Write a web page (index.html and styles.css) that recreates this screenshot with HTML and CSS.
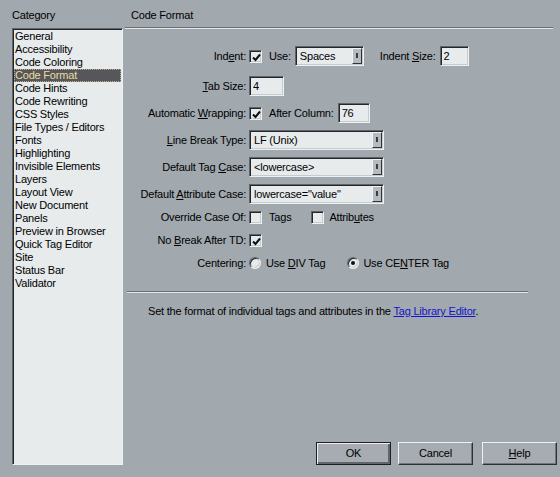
FILE: index.html
```html
<!DOCTYPE html>
<html lang="en">
<head>
    <meta charset="UTF-8">
    <title>Preferences</title>
    <link rel="stylesheet" href="styles.css">
</head>
<body>
    <div class="dialog">
        <div class="sidebar">
            <div class="caption">Category</div>
            <ul class="list">
                <li>General</li>
                <li>Accessibility</li>
                <li>Code Coloring</li>
                <li class="selected">Code Format</li>
                <li>Code Hints</li>
                <li>Code Rewriting</li>
                <li>CSS Styles</li>
                <li>File Types / Editors</li>
                <li>Fonts</li>
                <li>Highlighting</li>
                <li>Invisible Elements</li>
                <li>Layers</li>
                <li>Layout View</li>
                <li>New Document</li>
                <li>Panels</li>
                <li>Preview in Browser</li>
                <li>Quick Tag Editor</li>
                <li>Site</li>
                <li>Status Bar</li>
                <li>Validator</li>
            </ul>
        </div>

        <div class="main">
            <div class="caption pad">Code Format</div>
            <div class="rule"></div>

            <div class="form">
                <div class="row first">
                    <label>Ind<u>e</u>nt:</label>
                    <div class="controls">
                        <span class="check on"><svg viewBox="0 0 9 9"><path d="M1 4.5 L3.5 7 L8 1.5"/></svg></span>
                        <span class="text ml7">Use:</span>
                        <span class="select w68"><span class="value">Spaces</span><span class="drop"></span></span>
                        <span class="text ml16">Indent <u>S</u>ize:</span>
                        <input class="field w28" type="text" value="2">
                    </div>
                </div>
                <div class="row wide">
                    <label><u>T</u>ab Size:</label>
                    <div class="controls">
                        <input class="field w34" type="text" value="4">
                    </div>
                </div>
                <div class="row">
                    <label>Automatic <u>W</u>rapping:</label>
                    <div class="controls">
                        <span class="check on"><svg viewBox="0 0 9 9"><path d="M1 4.5 L3.5 7 L8 1.5"/></svg></span>
                        <span class="text ml7">After Column:</span>
                        <input class="field w31" type="text" value="76">
                    </div>
                </div>
                <div class="row">
                    <label><u>L</u>ine Break Type:</label>
                    <div class="controls">
                        <span class="select w134"><span class="value">LF (Unix)</span><span class="drop"></span></span>
                    </div>
                </div>
                <div class="row">
                    <label>Default Tag <u>C</u>ase:</label>
                    <div class="controls">
                        <span class="select w134"><span class="value">&lt;lowercase&gt;</span><span class="drop"></span></span>
                    </div>
                </div>
                <div class="row">
                    <label>Default <u>A</u>ttribute Case:</label>
                    <div class="controls">
                        <span class="select w134"><span class="value">lowercase="value"</span><span class="drop"></span></span>
                    </div>
                </div>
                <div class="row tight">
                    <label>Override Case Of:</label>
                    <div class="controls">
                        <span class="check"></span>
                        <span class="text ml7">Tags</span>
                        <span class="check ml20"></span>
                        <span class="text ml5">Attrib<u>u</u>tes</span>
                    </div>
                </div>
                <div class="row tight">
                    <label>No <u>B</u>reak After TD:</label>
                    <div class="controls">
                        <span class="check on"><svg viewBox="0 0 9 9"><path d="M1 4.5 L3.5 7 L8 1.5"/></svg></span>
                    </div>
                </div>
                <div class="row tight">
                    <label>Centering:</label>
                    <div class="controls">
                        <span class="radio"></span>
                        <span class="text ml5">Use <u>D</u>IV Tag</span>
                        <span class="radio on ml22"></span>
                        <span class="text ml4">Use CE<u>N</u>TER Tag</span>
                    </div>
                </div>
            </div>

            <div class="rule short"></div>

            <p class="note">Set the format of individual tags and attributes in the <a href="#">Tag Library Editor</a>.</p>

            <div class="buttons">
                <button class="default">OK</button>
                <button>Cancel</button>
                <button class="help"><u>H</u>elp</button>
            </div>
        </div>
    </div>
</body>
</html>
```

FILE: styles.css
```css
:root {
    --face: #a1a8ae;
    --well: #e7ebec;
    --shade: #5e646a;
    --dark: #24272a;
    --light: #eef1f2;
    --text: #000;
}

body {
    margin: 0;
    background: var(--face);
    color: var(--text);
    font-family: 'Liberation Sans', Arial, sans-serif;
    font-size: 11px;
    line-height: 13px;
    letter-spacing: -0.2px;
}

u {
    text-decoration: underline;
    text-underline-offset: 1px;
}

.dialog {
    display: flex;
    height: 477px;
}

/* category list on the left */
.sidebar {
    width: 123px;
    padding-left: 12px;
    box-sizing: border-box;
}

.caption {
    height: 27px;
    padding-top: 9px;
    box-sizing: border-box;
}

.caption.pad {
    padding-left: 6px;
}

.list {
    list-style: none;
    margin: 1px 0 0;
    padding: 1px 1px;
    height: 437px;
    box-sizing: border-box;
    background: var(--well);
    border: 1px solid;
    border-color: var(--shade) var(--light) var(--light) var(--shade);
    box-shadow: inset 1px 0 0 var(--dark), inset 0 1px 0 var(--dark);
}

.list li {
    height: 13px;
    padding-left: 1px;
    white-space: nowrap;
}

.list li.selected {
    background: #56565b;
    color: #eadc9c;
    outline: 1px dotted #b8b08a;
    outline-offset: -1px;
}

/* settings panel */
.main {
    flex: 1;
    margin-left: 2px;
    padding-right: 3px;
    display: flex;
    flex-direction: column;
}

.rule {
    border-top: 1px solid #6a7076;
    border-bottom: 1px solid #e4e7e9;
    margin-right: 4px;
}

.rule.short {
    margin: 18px 29px 0 2px;
}

.form {
    margin-top: 17px;
}

.row {
    display: flex;
    align-items: center;
    height: 20px;
    margin-top: 7px;
}

.row.first {
    margin-top: 0;
}

.row.wide {
    margin-top: 10px;
}

.row.tight {
    margin-top: 3px;
}

.row label {
    width: 121px;
    text-align: right;
    flex-shrink: 0;
    white-space: nowrap;
}

.controls {
    display: flex;
    align-items: center;
    margin-left: 3px;
    white-space: nowrap;
}

.ml4 { margin-left: 4px; }
.ml5 { margin-left: 5px; }
.ml7 { margin-left: 7px; }
.ml16 { margin-left: 16px; }
.ml20 { margin-left: 20px; }
.ml22 { margin-left: 22px; }

/* sunken controls */
.field,
.select,
.check,
.radio {
    background: var(--well);
    border: 1px solid;
    border-color: var(--shade) var(--light) var(--light) var(--shade);
    box-shadow: inset 1px 1px 0 var(--dark), inset -1px -1px 0 #c6cbce;
    box-sizing: border-box;
}

.field {
    height: 20px;
    padding: 0 3px;
    font: inherit;
    letter-spacing: inherit;
    color: var(--text);
    margin-left: 4px;
    outline: none;
}

.w28 { width: 29px; }
.w31 { width: 32px; }
.w34 { width: 35px; margin-left: 0; }

.select {
    display: flex;
    align-items: center;
    height: 20px;
    padding: 0 1px 0 4px;
    margin-left: 4px;
}

.row .controls > .select:first-child {
    margin-left: 0;
}

.w68 { width: 69px; }
.w134 { width: 135px; }

.select .value {
    flex: 1;
    overflow: hidden;
}

.drop {
    position: relative;
    width: 10px;
    height: 16px;
    background: #b6bbbf;
    border: 1px solid;
    border-color: #f2f4f5 #30343a #30343a #f2f4f5;
    box-sizing: border-box;
}

.drop::after {
    content: "";
    position: absolute;
    left: 3px;
    top: 4px;
    width: 2px;
    height: 5px;
    background: #3a3e44;
}

.check {
    display: inline-block;
    width: 13px;
    height: 13px;
    padding: 1px;
}

.check svg {
    display: block;
    width: 9px;
    height: 9px;
    margin: 1px 0 0 1px;
    fill: none;
    stroke: #111;
    stroke-width: 2;
}

.radio {
    display: inline-block;
    position: relative;
    width: 12px;
    height: 12px;
    border-radius: 50%;
}

.radio.on::after {
    content: "";
    position: absolute;
    left: 3px;
    top: 3px;
    width: 4px;
    height: 4px;
    border-radius: 50%;
    background: #111;
}

.note {
    margin: 12px 0 0 23px;
}

.note a {
    color: #1414c8;
    text-decoration: underline;
}

/* dialog buttons */
.buttons {
    margin-top: auto;
    margin-bottom: 12px;
    display: flex;
    justify-content: flex-end;
}

button {
    width: 75px;
    height: 23px;
    margin-left: 7px;
    font: inherit;
    letter-spacing: inherit;
    color: var(--text);
    background: #a6acb2;
    border: 1px solid;
    border-color: var(--light) #2c3035 #2c3035 var(--light);
    box-shadow: inset -1px -1px 0 #6f767c;
    padding: 0;
}

button.default {
    border: 1px solid #1c1e21;
    box-shadow: inset 1px 1px 0 var(--light), inset -2px -2px 0 #5f666c;
}

button.help {
    margin-left: 9px;
}
```
